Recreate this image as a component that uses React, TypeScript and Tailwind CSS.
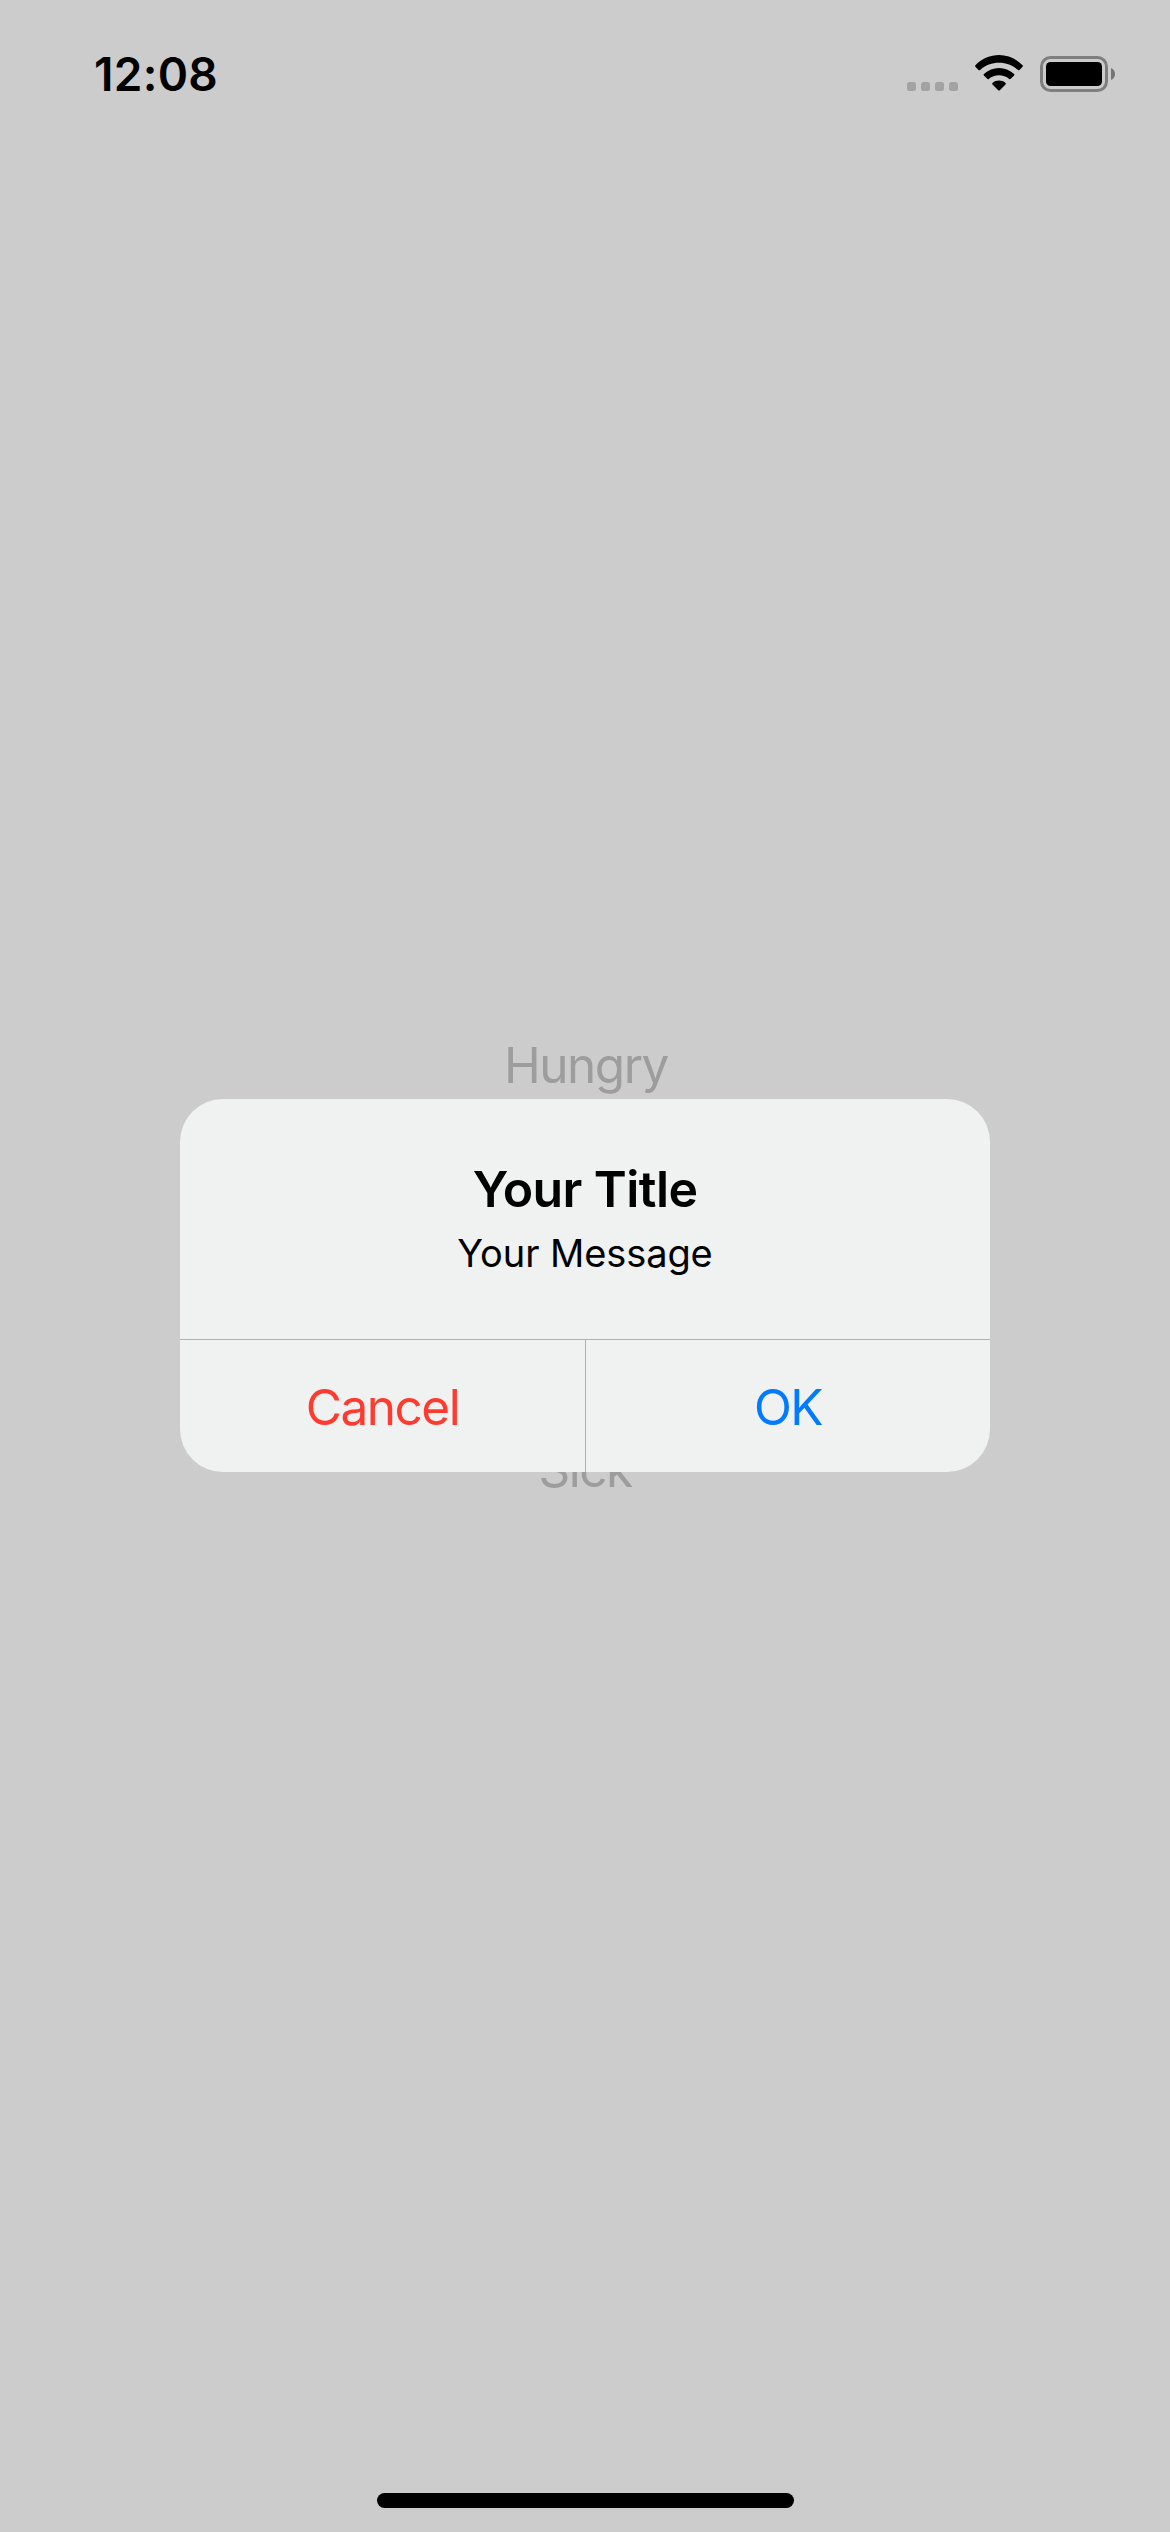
import React from "react";

function StatusIcons() {
  return (
    <svg className="block h-[40px] w-[212px]" viewBox="905 54 212 40">
      <g fill="#a3a3a3">
        <rect x="907" y="82" width="9" height="9" rx="2.5" />
        <rect x="921" y="82" width="9" height="9" rx="2.5" />
        <rect x="935" y="82" width="9" height="9" rx="2.5" />
        <rect x="949" y="82" width="9" height="9" rx="2.5" />
      </g>
      <g fill="#000">
        <path d="M975.4 65.2 C988.6 51.7 1009.4 51.7 1022.6 65.2 Q1023.3 66 1022.6 66.7 L1019.5 69.9 Q1018.7 70.7 1017.9 69.9 C1007.5 60.3 990.5 60.3 980.1 69.9 Q979.3 70.7 978.5 69.9 L975.4 66.7 Q974.7 66 975.4 65.2 Z" />
        <path d="M983.9 74 C992.4 66 1005.6 66 1014.1 74 Q1014.9 74.8 1014.1 75.6 L1010.8 78.8 Q1010 79.6 1009.2 78.9 C1003.6 73.9 994.4 73.9 988.8 78.9 Q988 79.6 987.2 78.8 L983.9 75.6 Q983.1 74.8 983.9 74 Z" />
        <path d="M992.5 82.9 C996 79.8 1002 79.8 1005.5 82.9 Q1006.3 83.7 1005.5 84.5 L999.8 90.2 Q999 91 998.2 90.2 L992.5 84.5 Q991.7 83.7 992.5 82.9 Z" />
      </g>
      <rect x="1041.5" y="57.5" width="65" height="33" rx="9" fill="none" stroke="#7f7f7f" strokeWidth="3" />
      <rect x="1046" y="62" width="56" height="24" rx="4.5" fill="#000" />
      <path d="M1111 68 C1113.5 69 1115 71.3 1115 74 C1115 76.7 1113.5 79 1111 80 Z" fill="#747474" />
    </svg>
  );
}

function StatusBar() {
  return (
    <header className="flex h-[141px] items-start justify-between pl-[94px] pr-[53px]">
      <div className="pt-[44px] text-[46px] font-semibold leading-[60px] tracking-[0.3px]">12:08</div>
      <div className="pt-[54px]">
        <StatusIcons />
      </div>
    </header>
  );
}

function Alert() {
  return (
    <div className="flex h-[373px] w-[810px] flex-col overflow-hidden rounded-[43px] bg-[#f0f1f1]">
      <div className="flex h-[240px] flex-col items-center gap-[10px] pt-[60px]">
        <h1 className="text-[50px] font-semibold leading-[60px] tracking-[-0.6px]">Your Title</h1>
        <p className="text-[38px] leading-[48px] tracking-[-0.1px]">Your Message</p>
      </div>
      <div className="flex flex-1 border-t border-[#b0b2b2] text-[49.5px] leading-[60px] tracking-[-1.5px]">
        <button className="w-[405px] pt-[2px] text-[#ff3b30]">Cancel</button>
        <button className="flex-1 border-l border-[#b0b2b2] pt-[2px] text-[#007aff]">OK</button>
      </div>
    </div>
  );
}

export default function App() {
  return (
    <div className="relative flex h-[2532px] w-[1170px] flex-col overflow-hidden bg-[#cccccc] font-['Inter',sans-serif] text-black">
      <StatusBar />
      <main className="flex flex-1 flex-col items-center gap-[344px] pt-[894px] text-[49.5px] leading-[60px] tracking-[-1.5px] text-[#9d9d9d]">
        <div className="pl-[2px]">Hungry</div>
        <div>Sick</div>
      </main>
      <footer className="flex h-[39px] justify-center">
        <div className="h-[15px] w-[417px] rounded-full bg-black" />
      </footer>
      <div className="absolute inset-x-0 top-[1099px] flex justify-center">
        <Alert />
      </div>
    </div>
  );
}
